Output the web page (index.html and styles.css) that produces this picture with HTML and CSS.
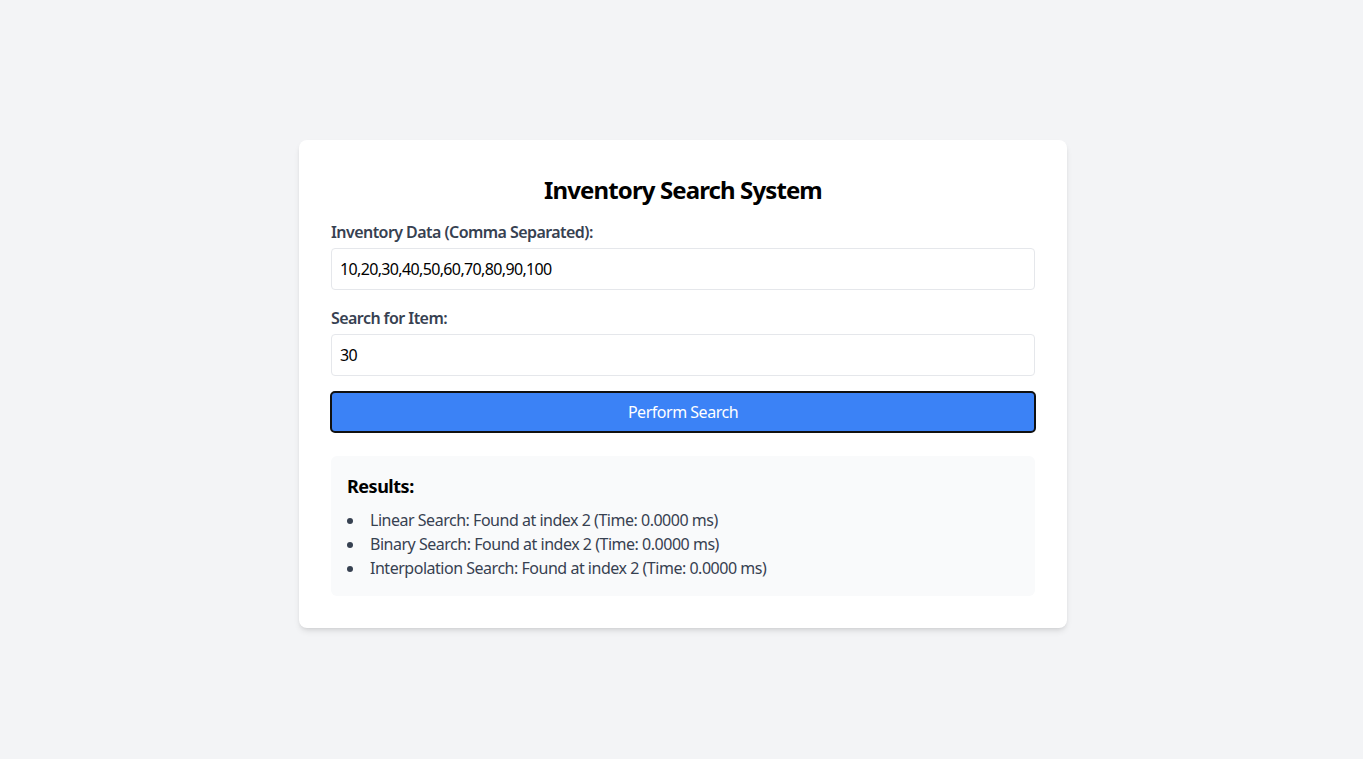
FILE: index.html
```html
<!DOCTYPE html>
<html lang="en">
<head>
<meta charset="utf-8">
<title>Inventory Search System</title>
<link rel="stylesheet" href="styles.css">
</head>
<body>
<main class="card">
  <h1 class="title">Inventory Search System</h1>
  <div class="field">
    <label class="label" for="data">Inventory Data (Comma Separated):</label>
    <input class="input" id="data" type="text" value="10,20,30,40,50,60,70,80,90,100">
  </div>
  <div class="field">
    <label class="label" for="item">Search for Item:</label>
    <input class="input" id="item" type="text" value="30">
  </div>
  <button class="button" type="button">Perform Search</button>
  <section class="results">
    <h2 class="results-title">Results:</h2>
    <ul class="results-list">
      <li>Linear Search: Found at index 2 (Time: 0.0000 ms)</li>
      <li>Binary Search: Found at index 2 (Time: 0.0000 ms)</li>
      <li>Interpolation Search: Found at index 2 (Time: 0.0000 ms)</li>
    </ul>
  </section>
</main>
</body>
</html>
```
FILE: styles.css
```css
* { box-sizing: border-box; }
html, body { margin: 0; padding: 0; }
body {
  background: #f3f4f6;
  font-family: "Noto Sans", "Open Sans", sans-serif;
  letter-spacing: -0.03em;
  color: #000;
  display: flex;
  flex-direction: column;
  align-items: center;
  padding-top: 140px;
  padding-left: 3px;
  min-height: 100vh;
}
.card {
  width: 768px;
  background: #fff;
  border-radius: 8px;
  padding: 32px;
  box-shadow: 0 4px 6px -1px rgba(0,0,0,.1), 0 2px 4px -2px rgba(0,0,0,.1);
}
.title {
  margin: 0 0 12px;
  font-size: 24px;
  line-height: 36px;
  font-weight: 700;
  letter-spacing: -0.037em;
  text-align: center;
}
.field { margin-bottom: 16px; }
.label {
  display: block;
  margin-bottom: 4px;
  font-size: 16px;
  line-height: 24px;
  font-weight: 600;
  letter-spacing: -0.035em;
  color: #374151;
}
.input {
  display: block;
  width: 100%;
  padding: 8px;
  border: 1px solid #e5e7eb;
  border-radius: 4px;
  font: inherit;
  letter-spacing: -0.04em;
  font-size: 16px;
  line-height: 24px;
  color: #000;
  background: #fff;
}
.button {
  display: block;
  width: 100%;
  height: 40px;
  border: 0;
  border-radius: 4px;
  background: #3b82f6;
  color: #fff;
  font: inherit;
  letter-spacing: -0.03em;
  font-size: 16px;
  line-height: 24px;
  outline: 2px solid #111;
  outline-offset: -1px;
}
.results {
  margin-top: 24px;
  background: #f9fafb;
  border-radius: 6px;
  padding: 16px;
}
.results-title {
  margin: 0 0 8px;
  font-size: 18px;
  line-height: 28px;
  font-weight: 700;
}
.results-list {
  margin: 0;
  padding: 0;
  list-style: none;
  color: #374151;
  font-size: 16px;
  line-height: 24px;
}
.results-list li::before {
  content: "";
  display: inline-block;
  width: 6px;
  height: 6px;
  border-radius: 50%;
  background: #374151;
  margin-right: 17px;
  vertical-align: 2px;
}
```
